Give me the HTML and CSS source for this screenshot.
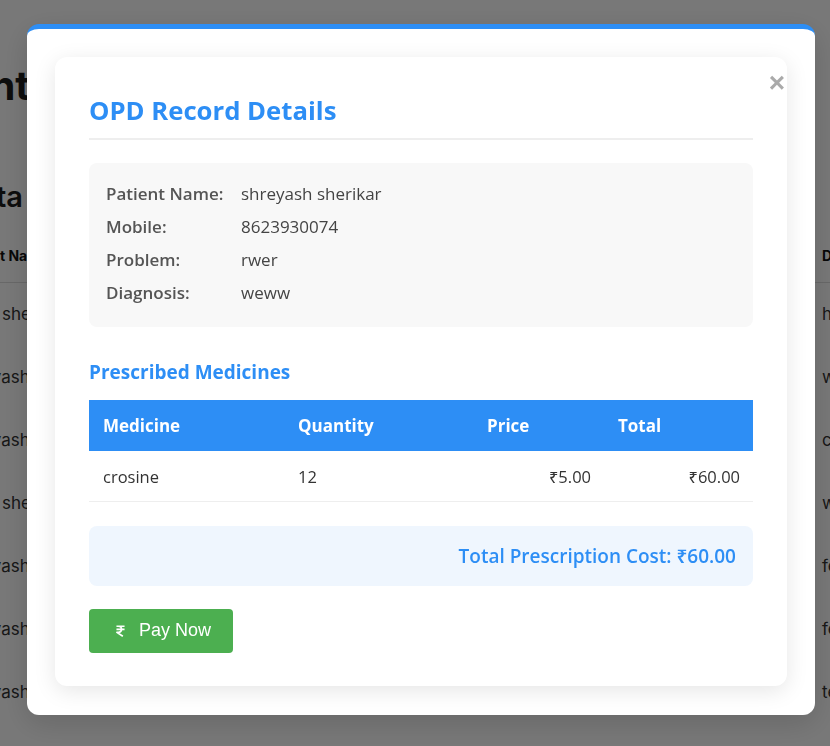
FILE: index.html
```html
<!DOCTYPE html>
<html lang="en">
<head>
<meta charset="utf-8">
<title>OPD Record Details</title>
<link rel="stylesheet" href="styles.css">
</head>
<body>
<div class="page">
  <div class="page-head"><h1 class="page-title">OPD Management</h1></div>
  <div class="page-head page-head-sub"><h2 class="page-subtitle">Patient Data</h2></div>
  <div class="bg-table">
    <div class="bg-row bg-header">
      <div class="bg-c1">Patient Name</div><div class="bg-c4">Diagnosis</div>
    </div>
    <div class="bg-row"><div class="bg-c1">rahul shelke</div><div class="bg-c4">headache</div></div>
    <div class="bg-row"><div class="bg-c1">shreyash sherikar</div><div class="bg-c4">weww</div></div>
    <div class="bg-row"><div class="bg-c1">shreyash sherikar</div><div class="bg-c4">cold</div></div>
    <div class="bg-row"><div class="bg-c1">rahul shelke</div><div class="bg-c4">weww</div></div>
    <div class="bg-row"><div class="bg-c1">shreyash sherikar</div><div class="bg-c4">fever</div></div>
    <div class="bg-row"><div class="bg-c1">shreyash sherikar</div><div class="bg-c4">fever</div></div>
    <div class="bg-row"><div class="bg-c1">shreyash sherikar</div><div class="bg-c4">test</div></div>
  </div>
</div>

<div class="overlay">
  <div class="modal">
    <div class="card">
      <span class="close">&times;</span>
      <h2 class="title">OPD Record Details</h2>

      <div class="info">
        <div class="label">Patient Name:</div><div class="value">shreyash sherikar</div>
        <div class="label">Mobile:</div><div class="value">8623930074</div>
        <div class="label">Problem:</div><div class="value">rwer</div>
        <div class="label">Diagnosis:</div><div class="value">weww</div>
      </div>

      <h3 class="section">Prescribed Medicines</h3>
      <table class="meds">
        <colgroup><col class="col-med"><col class="col-qty"><col class="col-price"><col class="col-total"></colgroup>
        <thead><tr><th>Medicine</th><th>Quantity</th><th>Price</th><th>Total</th></tr></thead>
        <tbody><tr><td>crosine</td><td>12</td><td class="num">₹5.00</td><td class="num">₹60.00</td></tr></tbody>
      </table>

      <div class="grand">Total Prescription Cost: ₹60.00</div>

      <button class="pay" type="button">
        <svg class="pay-icon" viewBox="0 0 10 13" width="9" height="12" aria-hidden="true">
          <path d="M0.5 1.2 H9.5 M0.5 4.6 H9.5 M2.6 1.2 C7.4 1.2 7.4 8 2.6 8 H1 L7.6 12.4" fill="none" stroke="#fff" stroke-width="1.9" stroke-linejoin="round"/>
        </svg>
        <span>Pay Now</span>
      </button>
    </div>
  </div>
</div>
</body>
</html>
```

FILE: styles.css
```css
html, body {
  margin: 0;
  padding: 0;
}

body {
  background: #ffffff;
  font-family: "Inter", "Noto Sans", sans-serif;
  color: #222;
  overflow: hidden;
}

/* ---------- background page ---------- */
.page {
  padding-top: 62px;
}

.page-head {
  display: flex;
  justify-content: flex-end;
  width: 30px;
  white-space: nowrap;
}

.page-head-sub {
  width: 23px;
  margin-top: 70px;
}

.page-title {
  margin: 0;
  font-size: 40px;
  line-height: 1.2;
  font-weight: 700;
  color: #1c1c1c;
}

.page-subtitle {
  margin: 0;
  font-size: 29px;
  line-height: 1.2;
  font-weight: 600;
  color: #1c1c1c;
}

.bg-table {
  margin-top: 15px;
  margin-left: -43px;
}

.bg-row {
  display: grid;
  grid-template-columns: 865px 200px;
  height: 63px;
  align-items: center;
  white-space: nowrap;
  font-size: 17px;
  color: #333;
}

.bg-header {
  height: 52px;
  font-size: 14px;
  font-weight: 700;
  color: #111;
  border-bottom: 1px solid #dddddd;
}

/* ---------- overlay / modal ---------- */
.overlay {
  position: fixed;
  inset: 0;
  background: rgba(0, 0, 0, 0.53);
  padding: 24px 0 0 27px;
}

.modal {
  width: 788px;
  box-sizing: border-box;
  background: #ffffff;
  border-radius: 12px;
  border-top: 5px solid #2d8ef5;
  padding: 28px 28px 29px;
  box-shadow: 0 8px 30px rgba(0, 0, 0, 0.15);
}

.card {
  position: relative;
  background: #ffffff;
  border-radius: 12px;
  box-shadow: 0 5px 22px rgba(0, 0, 0, 0.1);
  padding: 39px 34px 33px 34px;
  font-family: "Open Sans", "Noto Sans", sans-serif;
  color: #333;
}

.close {
  position: absolute;
  top: 12px;
  right: 2px;
  font-family: "Liberation Sans", Arial, sans-serif;
  font-size: 28px;
  line-height: 1;
  font-weight: 700;
  color: #aaaaaa;
}

.title {
  margin: 0 0 23px;
  padding-bottom: 11px;
  border-bottom: 2px solid #eeeeee;
  font-size: 25.7px;
  line-height: 1.2;
  font-weight: 700;
  color: #2d8ef5;
}

.info {
  display: grid;
  grid-template-columns: 135px 1fr;
  background: #f8f8f8;
  border-radius: 8px;
  padding: 14px 17px 18px;
  font-size: 17px;
  line-height: 33px;
}

.label {
  font-weight: 600;
  color: #555555;
}

.value {
  color: #444444;
}

.section {
  margin: 34px 0 16px;
  font-size: 19px;
  line-height: 1.2;
  font-weight: 700;
  color: #2d8ef5;
}

.meds {
  width: 100%;
  border-collapse: collapse;
  table-layout: fixed;
}

.col-med { width: 195px; }
.col-qty { width: 189px; }
.col-price { width: 131px; }
.col-total { width: 149px; }

.meds th {
  background: #2d8ef5;
  color: #ffffff;
  text-align: left;
  font-size: 17px;
  font-weight: 700;
  line-height: 23px;
  padding: 14px;
}

.meds td {
  font-size: 16.5px;
  line-height: 23px;
  padding: 14px 14px 13px;
  color: #333333;
  border-bottom: 1px solid #eeeeee;
}

.meds td.num {
  text-align: right;
  padding-right: 13px;
}

.grand {
  margin-top: 24px;
  background: #eff6fe;
  border-radius: 8px;
  padding: 18px 17px;
  line-height: 24px;
  text-align: right;
  font-size: 19px;
  font-weight: 600;
  color: #2d8ef5;
}

.pay {
  margin-top: 23px;
  display: inline-flex;
  align-items: center;
  gap: 14px;
  height: 44px;
  padding: 0 22px 0 27px;
  border: none;
  border-radius: 4px;
  background: #4caf50;
  color: #ffffff;
  font-family: "Liberation Sans", Arial, sans-serif;
  font-size: 18px;
  vertical-align: top;
}

.pay-icon {
  display: block;
}
```
